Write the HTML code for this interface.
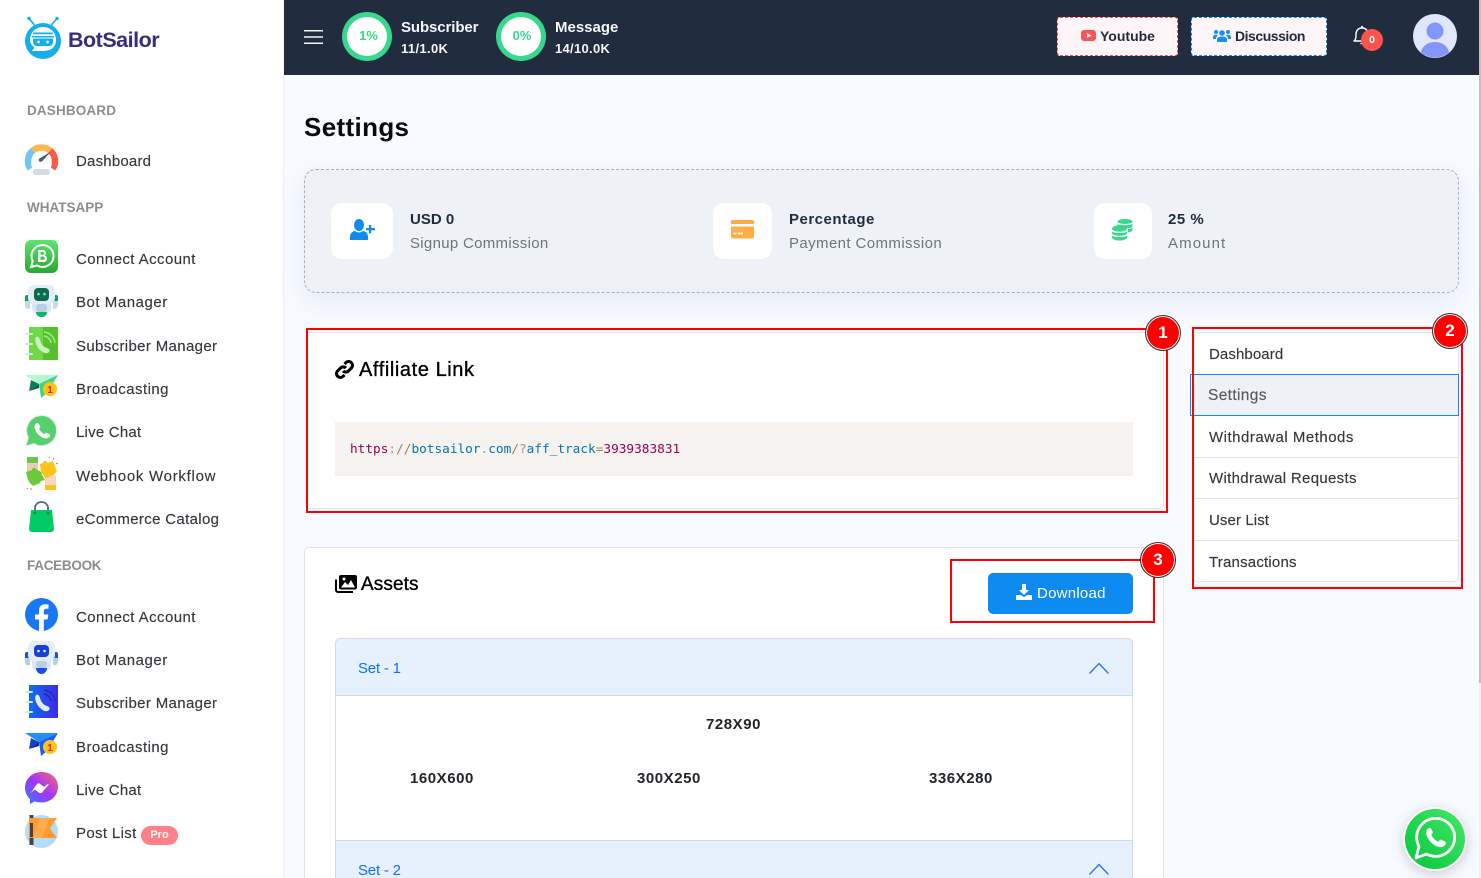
<!DOCTYPE html>
<html lang="en"><head><meta charset="utf-8"><title>Settings</title>
<style>
*{box-sizing:border-box}
html,body{margin:0;padding:0;width:1481px;height:878px;overflow:hidden;background:#f7faff;font-family:"Liberation Sans",sans-serif}
#wrap{position:absolute;left:0;top:0;width:1481px;height:878px;overflow:hidden}
.a{position:absolute}
.t{position:absolute;white-space:nowrap;line-height:20px;height:20px}
svg{position:absolute;display:block;overflow:visible}
#side{left:0;top:0;width:284px;height:878px;background:#fff;border-right:1px solid #eef0f4}
#top{left:284px;top:0;width:1195px;height:75px;background:#212d3f}
.nav{left:76px;font-size:15px;color:#34383d;margin-top:2px;-webkit-text-stroke:.15px #34383d}
.sec{left:27px;font-size:13.5px;font-weight:bold;color:#8b8d90;margin-top:1px}
.ring{width:50px;height:49px;border:5px solid #37d88c;border-radius:50%;background:#fff;top:12px;color:#37d88c;font-weight:bold;font-size:13px;text-align:center;line-height:38px}
.btn{top:17px;height:39px;background:#fef5f8;border-radius:3px;border:1px dashed}
.bt{font-size:14px;font-weight:bold;color:#212d3f}
.card{background:#fff;border:1px solid #e2e6ec;border-radius:5px}
.ib{top:203px;height:56px;background:#fff;border-radius:11px}
.sh{font-size:15px;font-weight:bold;color:#212d3f;margin-top:2px}
.sl{font-size:15px;color:#6c757d;margin-top:2px}
.li{left:1209px;font-size:15px;color:#33373b;margin-top:2px;-webkit-text-stroke:.15px #33373b}
.div{left:1193px;width:265px;height:1px;background:#e1e4e9}
.red{border:2px solid #f00}
.num{width:36px;height:36px;border-radius:50%;background:#f00;border:1px solid #333;box-shadow:inset 0 0 0 1px #fff;color:#fff;font-weight:bold;font-size:17px;text-align:center;line-height:34px}
.sz{font-size:15px;font-weight:bold;color:#212529;letter-spacing:.55px;margin-top:2px}
</style></head><body><div id="wrap">

<div class="a" id="side"></div>
<div class="a" id="top"></div>
<div class="a" style="left:1479px;top:0;width:2px;height:878px;background:#f1f1f1"></div>
<div class="a" style="left:1479px;top:0;width:2px;height:683px;background:#c1c1c1"></div>

<!-- logo -->
<svg style="left:25px;top:17px" width="36" height="42" viewBox="0 0 36 42">
<path d="M9.500 8 4.500 2M26.500 8 31.500 2" stroke="#12aef0" stroke-width="1.600" fill="none"/><circle cx="4" cy="1.500" r="1.700" fill="#12aef0"/><circle cx="32" cy="1.500" r="1.700" fill="#12aef0"/>
<circle cx="18" cy="24" r="18" fill="#12aef0"/>
<path d="M5 23c0-8 6-13 13-13s13 5 13 13c0 8-6 11-13 11H7l2.500-3.500C6.500 28.500 5 26 5 23z" fill="#fff"/>
<path d="M8 15.500h20v1.800H8zM7 19h22v1.500H7z" fill="#12aef0"/><path d="M8 21.500h20v3c0 3-2 4.500-4 4.500H12c-2 0-4-1.500-4-4.500z" fill="#12aef0"/><circle cx="13.500" cy="25" r="1.400" fill="#fff"/><circle cx="22.500" cy="25" r="1.400" fill="#fff"/>
</svg>
<div class="t" style="left:68px;top:28px;height:24px;line-height:24px;font-size:21.5px;font-weight:bold;color:#3a2b7d;letter-spacing:-.5px">BotSailor</div>

<div class="t sec" style="top:100px;letter-spacing:.15px">DASHBOARD</div>
<div class="t sec" style="top:197px">WHATSAPP</div>
<div class="t sec" style="top:555px;letter-spacing:-.28px">FACEBOOK</div>

<div class="t nav" style="top:150px;letter-spacing:.2px">Dashboard</div>
<div class="t nav" style="top:248px;letter-spacing:.43px">Connect Account</div>
<div class="t nav" style="top:291px;letter-spacing:.53px">Bot Manager</div>
<div class="t nav" style="top:335px;letter-spacing:.35px">Subscriber Manager</div>
<div class="t nav" style="top:378px;letter-spacing:.45px">Broadcasting</div>
<div class="t nav" style="top:421px;letter-spacing:.22px">Live Chat</div>
<div class="t nav" style="top:465px;letter-spacing:.72px">Webhook Workflow</div>
<div class="t nav" style="top:508px;letter-spacing:.34px">eCommerce Catalog</div>
<div class="t nav" style="top:606px;letter-spacing:.43px">Connect Account</div>
<div class="t nav" style="top:649px;letter-spacing:.53px">Bot Manager</div>
<div class="t nav" style="top:692px;letter-spacing:.35px">Subscriber Manager</div>
<div class="t nav" style="top:736px;letter-spacing:.45px">Broadcasting</div>
<div class="t nav" style="top:779px;letter-spacing:.22px">Live Chat</div>
<div class="t nav" style="top:822px;letter-spacing:.35px">Post List</div>
<div class="a" style="left:141px;top:826px;width:37px;height:19px;border-radius:10px;background:#ff8086;color:#fff;font-size:11px;font-weight:bold;text-align:center;line-height:18px">Pro</div>

<!-- sidebar icons -->
<svg style="left:25px;top:144px" width="33" height="31" viewBox="0 0 33 31">
<g fill="none" stroke-width="6.500"><path d="M5.440 24.740A13.500 13.500 0 0 1 7.820 6.660" stroke="#6fc5f5"/><path d="M7.820 6.660A13.500 13.500 0 0 1 25.180 6.660" stroke="#fdb84d"/><path d="M25.180 6.660A13.500 13.500 0 0 1 27.560 24.740" stroke="#fb5c4a"/></g>
<path d="M8 25.500A10.300 10.300 0 1 1 25 25.500Z" fill="#fff"/><path d="M14.500 14.500 26 7.500 17.500 17Z" fill="#4c5a6c"/><circle cx="15.500" cy="16" r="1.800" fill="#4c5a6c"/><rect x="8" y="25" width="17" height="6" rx="3" fill="#d2dae6"/></svg>

<svg style="left:25px;top:240px" width="33" height="33" viewBox="0 0 33 33"><defs><linearGradient id="g1" x1="0" y1="0" x2="0" y2="1"><stop offset="0" stop-color="#5fe36f"/><stop offset="1" stop-color="#27a82f"/></linearGradient></defs><rect width="33" height="33" rx="6" fill="url(#g1)"/><path d="M6 27l1.700-6A11 11 0 1 1 12 25.500Z" fill="none" stroke="#fff" stroke-width="2"/><path d="M13 10h5a3 3 0 0 1 1.500 5.500A3.200 3.200 0 0 1 18 22h-5ZM15.500 12v2.700H18a1.300 1.300 0 0 0 0-2.700ZM15.500 16.500v3.300H18a1.600 1.600 0 0 0 0-3.300Z" fill="#fff" fill-rule="evenodd"/></svg>

<svg style="left:25px;top:285px" width="33" height="32" viewBox="0 0 33 32"><rect x="0" y="10" width="5" height="9" rx="2" fill="#0f9e5f"/><rect x="28" y="10" width="5" height="9" rx="2" fill="#0f9e5f"/><path d="M0 16h5v7a2 2 0 0 1-2 1c-2 0-3-2-3-4zM33 16h-5v7c2 2 5 0 5-4z" fill="#c5d9ea"/><rect x="3" y="0" width="27" height="19" rx="6" fill="#e2edf5"/><rect x="9" y="3" width="15" height="13" rx="4" fill="#0e6a4e"/><circle cx="13.500" cy="9" r="1.300" fill="#7df0b8"/><circle cx="19.500" cy="9" r="1.300" fill="#7df0b8"/><path d="M7 19h19v5a4 4 0 0 1-4 4H11a4 4 0 0 1-4-4z" fill="#dbe8f2"/><rect x="11" y="19" width="11" height="8" rx="3" fill="#b8d0e6"/><path d="M11 27h11c0 3-2 5-5.500 5S11 30 11 27z" fill="#0bb569"/></svg>

<svg style="left:25px;top:327px" width="33" height="33" viewBox="0 0 33 33"><rect x="4" width="29" height="33" fill="#6fd845"/><rect x="18" width="15" height="33" fill="#55c12c"/><path d="M1 7h6M1 17h6M1 27h6" stroke="#d9e6ee" stroke-width="2" fill="none" stroke-linecap="round"/><path d="M11 10c2-1 3 0 4 3l1 3c2 3 3 4 6 5 3 1 3 3 2 4-3 3-7 0-10-3-3-4-5-9-3-12z" fill="#cdeec0"/><path d="M19 9a8 8 0 0 1 7 7M19 5a12 12 0 0 1 11 11" stroke="#a6e68a" stroke-width="1.500" fill="none"/></svg>

<svg style="left:25px;top:375px" width="33" height="24" viewBox="0 0 33 24"><path d="M0 0H33L14 9Z" fill="#b5f7d0"/><path d="M33 0 14 9 16 23 22 18Z" fill="#3ed48c"/><path d="M6 5 14 9 4 16Z" fill="#0e7b53"/><path d="M14 9 4 16 14 13Z" fill="#08593d"/><circle cx="25" cy="14" r="7" fill="#fcc419"/><text x="25" y="18" font-size="10" font-weight="bold" fill="#e81e63" text-anchor="middle" font-family="Liberation Sans,sans-serif">1</text></svg>

<svg style="left:25px;top:414px" width="33" height="33" viewBox="0 0 33 33"><path d="M1 32l2.300-8.500A15 15 0 1 1 9 29.500Z" fill="#56d06c" stroke="#e6e9e6" stroke-width="1"/><path d="M12 9c-2 1-3 3-2 6 1 4 5 8 9 9 3 1 5 0 6-2 0-1 0-2-1-2l-3-1.500-1.500 1.500c-2-.5-5-3.500-5.500-5.500l1.500-1.500L13.500 9.500Z" fill="#fff"/></svg>

<svg style="left:25px;top:457px" width="33" height="33" viewBox="0 0 33 33"><rect x="2" y="0" width="11" height="6" fill="#68c94a"/><path d="M2 6h11v13H2z" fill="#eccbb4"/><rect x="20" y="28" width="11" height="5" fill="#fcc419"/><path d="M20 19h11v9H20z" fill="#f4d7c4"/><path d="M15 7l3-1c0-2 3-3 4-1l1 1 5-2 4 11-2 1-1 2-8 3-2-1-1-3-2-1z" fill="#fcc419"/><path d="M1 15l6-2c0-2 3-3 4-1l5 3 1 3 3 5-4 1-1 2-7 3-1-1-2-2-2-3z" fill="#6cc93c"/><path d="M24 1l1-1M28 3l1-2M31 7l2-1M2 31l1 1M6 31l0 2" stroke="#777" stroke-width=".8"/></svg>

<svg style="left:29px;top:502px" width="25" height="30" viewBox="0 0 25 30"><path d="M6 10V6a6.500 6 0 0 1 13 0v4" stroke="#4f6b82" stroke-width="1.800" fill="none"/><path d="M2 8h21l2 19a3 3 0 0 1-3 3H3a3 3 0 0 1-3-3Z" fill="#00cc66"/><circle cx="6" cy="11" r="1.500" fill="#099150"/><circle cx="19" cy="11" r="1.500" fill="#099150"/></svg>

<svg style="left:25px;top:598px" width="33" height="33" viewBox="0 0 33 33"><circle cx="16.500" cy="16.500" r="16.500" fill="#1877f2"/><path d="M14 33V21.500H10V16.500H14V12.800C14 8.500 16.500 6.300 20.300 6.300c1.800 0 3.200.3 3.200.3v4.200h-2c-2.100 0-2.700 1.300-2.700 2.600v3.100H23.300L22.500 21.500H18.800V33Z" fill="#fff"/></svg>

<svg style="left:25px;top:641px" width="33" height="33" viewBox="0 0 33 33"><rect x="0" y="11" width="5" height="9" rx="2" fill="#1a4cf0"/><rect x="28" y="11" width="5" height="9" rx="2" fill="#1a4cf0"/><path d="M0 17h5v7c-2 1-5 0-5-4zM33 17h-5v7c2 1 5 0 5-4z" fill="#b9cfe6"/><rect x="3" y="0" width="27" height="20" rx="6" fill="#e2edf5"/><rect x="9" y="4" width="15" height="12" rx="4" fill="#1640d8"/><circle cx="13.500" cy="10" r="1.300" fill="#dbe7ff"/><circle cx="19.500" cy="10" r="1.300" fill="#dbe7ff"/><path d="M7 20h19v5a4 4 0 0 1-4 4H11a4 4 0 0 1-4-4z" fill="#dbe8f2"/><rect x="11" y="20" width="11" height="7" rx="3" fill="#b8d0e6"/><path d="M11 27h11c0 3-2 6-5.500 6S11 30 11 27z" fill="#1a4cf0"/></svg>

<svg style="left:25px;top:685px" width="33" height="33" viewBox="0 0 33 33"><defs><linearGradient id="g2" x1="0" y1="0" x2="1" y2="0"><stop offset="0" stop-color="#0f6ef0"/><stop offset="1" stop-color="#3d2ae8"/></linearGradient></defs><rect x="4" width="29" height="33" fill="url(#g2)"/><path d="M1 7h6M1 17h6M1 27h6" stroke="#d9e6ee" stroke-width="2" fill="none" stroke-linecap="round"/><path d="M11 10c2-1 3 0 4 3l1 3c2 3 3 4 6 5 3 1 3 3 2 4-3 3-7 0-10-3-3-4-5-9-3-12z" fill="#e4ecf5"/><path d="M19 9a8 8 0 0 1 7 7M19 5a12 12 0 0 1 11 11" stroke="#2a27a8" stroke-width="1.500" fill="none"/></svg>

<svg style="left:25px;top:733px" width="33" height="24" viewBox="0 0 33 24"><path d="M0 0H33L14 9Z" fill="#1e90ff"/><path d="M33 0 14 9 16 23 22 18Z" fill="#1c5cf0"/><path d="M6 5 14 9 4 16Z" fill="#1640c8"/><path d="M14 9 4 16 14 13Z" fill="#0a2a96"/><circle cx="25" cy="14" r="7" fill="#fcc419"/><text x="25" y="18" font-size="10" font-weight="bold" fill="#e81e63" text-anchor="middle" font-family="Liberation Sans,sans-serif">1</text></svg>

<svg style="left:25px;top:772px" width="33" height="33" viewBox="0 0 33 33"><defs><linearGradient id="g3" x1="0" y1="1" x2="1" y2="0"><stop offset="0" stop-color="#2d7bff"/><stop offset=".5" stop-color="#a334fa"/><stop offset="1" stop-color="#ff6968"/></linearGradient></defs><path d="M16.500 0C7.300 0 0 6.900 0 15.700c0 4.600 2 8.600 5 11.300V32l4.800-2.600c2 .7 4.300 1 6.700 1 9.200 0 16.500-6.800 16.500-15.700S25.700 0 16.500 0Z" fill="url(#g3)"/><path d="M6.500 20 11.500 12.500c.8-1.200 2.400-1.500 3.500-.6l4 3 3.700-2.800c.5-.4 1.200.2.800.8L17.500 20c-.8 1.200-2.400 1.500-3.500.6l-4-3-3.700 2.800c-.5.400-1.200-.2-.8-.8Z" fill="#fff"/></svg>

<svg style="left:25px;top:815px" width="33" height="33" viewBox="0 0 33 33"><circle cx="16.500" cy="16.500" r="16.500" fill="#b2dcf8"/><rect x="4.500" y="0" width="4" height="30" fill="#444"/><path d="M4 3H32L25 13.500 32 23H4Z" fill="#ff9a2e"/><path d="M15 3h10L17 23H8Z" fill="#ffab4e"/><rect x="5" y="8" width="3" height="14" fill="#444"/></svg>

<!-- top bar -->
<svg style="left:304px;top:30px" width="19" height="14"><path d="M0 .75H19M0 7H19M0 13.250H19" stroke="#f2f4f7" stroke-width="1.500"/></svg>
<div class="a ring" style="left:342px;padding-left:3px">1%</div>
<div class="t" style="left:401px;top:18px;font-size:15px;font-weight:bold;color:#f4f6f8;letter-spacing:-.1px">Subscriber</div>
<div class="t" style="left:401px;top:39px;font-size:13px;font-weight:bold;color:#f4f6f8;letter-spacing:.35px">11/1.0K</div>
<div class="a ring" style="left:496px;padding-left:2px">0%</div>
<div class="t" style="left:555px;top:18px;font-size:15px;font-weight:bold;color:#f4f6f8">Message</div>
<div class="t" style="left:555px;top:39px;font-size:13px;font-weight:bold;color:#f4f6f8;letter-spacing:.3px">14/10.0K</div>

<div class="a btn" style="left:1057px;width:121px;border-color:#e05560"></div>
<svg style="left:1081px;top:30px" width="15" height="11"><rect width="15" height="11" rx="3" fill="#f8545c"/><path d="M6 3 10.500 5.500 6 8Z" fill="#fff"/></svg>
<div class="t bt" style="left:1100px;top:26px">Youtube</div>
<div class="a btn" style="left:1191px;width:136px;border-color:#0d8bf0"></div>
<svg style="left:1213px;top:29px" width="18" height="13" viewBox="0 0 18 13" fill="#1890f0"><circle cx="9" cy="4" r="2.800"/><circle cx="3" cy="3" r="2"/><circle cx="15" cy="3" r="2"/><path d="M4 13V10.500C4 8.500 6 7.500 9 7.500s5 1 5 3V13ZM0 8.500C0 6.500 1.500 5.800 3 5.800c1 0 1.500.3 2 .8-1.500.8-2 2-2 3.400H0ZM18 8.500c0-2-1.500-2.700-3-2.700-1 0-1.500.3-2 .8 1.500.8 2 2 2 3.400h3Z"/></svg>
<div class="t bt" style="left:1235px;top:26px;letter-spacing:-.47px">Discussion</div>
<svg style="left:1353px;top:25px" width="18" height="20" viewBox="0 0 18 20"><path d="M1 16c2-2 2-3 2-7 0-3 2-6 6-6s6 3 6 6c0 4 0 5 2 7Z" fill="none" stroke="#fff" stroke-width="1.400" stroke-linejoin="round"/><path d="M7.500 18.500h3" stroke="#fff" stroke-width="1.400"/><circle cx="9" cy="1.800" r="1" fill="#fff"/></svg>
<div class="a" style="left:1361px;top:29px;width:22px;height:22px;border-radius:50%;background:#fc544b;color:#fff;font-size:10.5px;font-weight:bold;text-align:center;line-height:23px">0</div>
<svg style="left:1413px;top:14px" width="44" height="44" viewBox="0 0 44 44"><defs><clipPath id="av"><circle cx="22" cy="22" r="21.500"/></clipPath></defs><circle cx="22" cy="22" r="22" fill="#dfe8fb"/><g clip-path="url(#av)" fill="#8296fb"><circle cx="22" cy="17" r="8.500"/><path d="M7 44c0-10 6-16 15-16s15 6 15 16Z"/></g></svg>

<!-- page -->
<div class="t" style="left:304px;top:112px;height:30px;line-height:30px;font-size:26px;font-weight:bold;color:#0a0a0a;letter-spacing:.35px">Settings</div>

<div class="a" style="left:304px;top:169px;width:1155px;height:124px;background:#eef2f6;border:1px dashed #a9b1bd;border-radius:12px;box-shadow:0 8px 24px rgba(160,175,205,.18)"></div>
<div class="a ib" style="left:331px;width:62px"></div>
<div class="a ib" style="left:713px;width:59px"></div>
<div class="a ib" style="left:1094px;width:58px"></div>
<svg style="left:350px;top:219px" width="25" height="21" viewBox="0 0 25 21" fill="#0d8bf0"><ellipse cx="9" cy="6" rx="5" ry="6"/><path d="M0 21v-3c0-4 3-6 5-6 3 2 5 2 8 0 2 0 5 2 5 6v3Z"/><path d="M19 6h2.200v3H25v2.200h-3.800v3H19v-3h-3V9h3Z"/></svg>
<svg style="left:731px;top:220px" width="23" height="19" viewBox="0 0 23 19" fill="#ffac45"><path d="M0 3a2 2 0 0 1 2-3h19a2 2 0 0 1 2 3v1H0Z"/><path d="M0 6.500H23V16a2 2 0 0 1-2 2.500H2A2 2 0 0 1 0 16Z"/><rect x="2.500" y="12.500" width="3" height="2" fill="#fff"/><rect x="7" y="12.500" width="5" height="2" fill="#fff"/></svg>
<svg style="left:1112px;top:219px" width="22" height="22" viewBox="0 0 22 22" fill="#37d88c"><ellipse cx="13" cy="2.500" rx="7.500" ry="2.500"/><path d="M5.500 5c2 1.500 13 1.500 15 0v2c0 1.500-2 2-5 2.200-2-1-6-1.500-10-1Z"/><path d="M16 10c2 0 3.500-.5 4.500-1.500V11c0 1-1.500 2-4.500 2Z"/><ellipse cx="7.500" cy="9.500" rx="7.500" ry="3.200"/><path d="M0 12.500c2 2 13 2 15 0v2c-1 3-14 3-15 0Z"/><path d="M0 16.500c2 2 13 2 15 0v2c-1 4-14 4-15 0Z"/></svg>

<div class="t sh" style="left:410px;top:208px">USD 0</div>
<div class="t sl" style="left:410px;top:232px;letter-spacing:.3px">Signup Commission</div>
<div class="t sh" style="left:789px;top:208px;letter-spacing:.5px">Percentage</div>
<div class="t sl" style="left:789px;top:232px;letter-spacing:.4px">Payment Commission</div>
<div class="t sh" style="left:1168px;top:208px;letter-spacing:.5px">25 %</div>
<div class="t sl" style="left:1168px;top:232px;letter-spacing:1.1px">Amount</div>

<!-- affiliate -->
<div class="a card" style="left:305px;top:332px;width:859px;height:177px"></div>
<div class="a red" style="left:306px;top:328px;width:862px;height:185px"></div>
<svg style="left:335px;top:360px" width="19" height="19" viewBox="0 0 20 20" fill="none" stroke="#000" stroke-width="3.200"><path d="M8.500 11.500a4 4 0 0 0 5.700 0l3-3a4 4 0 0 0-5.700-5.700L10 4.300"/><path d="M11.500 8.500a4 4 0 0 0-5.700 0l-3 3a4 4 0 0 0 5.700 5.700L10 15.700"/></svg>
<div class="t" style="left:359px;top:360px;font-size:20px;color:#000;letter-spacing:.58px;-webkit-text-stroke:.35px #000">Affiliate Link</div>
<div class="a" style="left:335px;top:422px;width:798px;height:54px;background:#f5f2f0"></div>
<div class="t" style="left:350px;top:440px;font-family:'DejaVu Sans Mono',monospace;font-size:12.75px;margin-top:-2px;padding-top:2px;height:22px"><span style="color:#905">https</span><span style="color:#999">:</span><span style="color:#a67f59">//</span><span style="color:#07a">botsailor</span><span style="color:#999">.</span><span style="color:#07a">com</span><span style="color:#a67f59">/</span><span style="color:#999">?</span><span style="color:#07a">aff_track</span><span style="color:#a67f59">=</span><span style="color:#905">3939383831</span></div>

<!-- list -->
<div class="a card" style="left:1192px;top:332px;width:267px;height:250px;border-radius:6px"></div>
<div class="a" style="left:1190px;top:374px;width:269px;height:42px;background:#eef2f6;border:1px solid #0d8bf0"></div>
<div class="a div" style="top:457px"></div>
<div class="a div" style="top:498px"></div>
<div class="a div" style="top:540px"></div>
<div class="t li" style="top:343px;letter-spacing:.1px">Dashboard</div>
<div class="t li" style="left:1208px;top:384px;color:#565a5f;-webkit-text-stroke:.15px #565a5f;font-size:15.5px;letter-spacing:.35px">Settings</div>
<div class="t li" style="top:426px;letter-spacing:.5px">Withdrawal Methods</div>
<div class="t li" style="top:467px;letter-spacing:.32px">Withdrawal Requests</div>
<div class="t li" style="top:509px;letter-spacing:.1px">User List</div>
<div class="t li" style="top:551px;letter-spacing:.2px">Transactions</div>
<div class="a red" style="left:1192px;top:327px;width:271px;height:262px"></div>

<!-- assets -->
<div class="a card" style="left:304px;top:547px;width:860px;height:331px;border-bottom:0;border-radius:5px 5px 0 0"></div>
<svg style="left:335px;top:575px" width="22" height="18" viewBox="0 0 22 18"><path d="M1 4.500V15a2 2 0 0 0 2 2h15" fill="none" stroke="#000" stroke-width="2"/><rect x="4" y="0" width="18" height="14.500" rx="2" fill="#000"/><path d="M6 12.500 10 7l3 3 3-5 4 7.500Z" fill="#fff"/><circle cx="9" cy="4" r="1.500" fill="#fff"/></svg>
<div class="t" style="left:361px;top:575px;font-size:19px;color:#000;letter-spacing:.1px;-webkit-text-stroke:.35px #000">Assets</div>
<div class="a red" style="left:950px;top:559px;width:205px;height:64px"></div>
<div class="a" style="left:988px;top:573px;width:145px;height:41px;background:#0d8bf0;border-radius:5px"></div>
<svg style="left:1016px;top:584px" width="16" height="16" viewBox="0 0 16 16" fill="#fff"><path d="M6 0h4v6h3L8 11 3 6h3Z"/><path d="M0 11h4.500L8 13l3.500-2H16v5H0Z"/></svg>
<div class="t" style="left:1037px;top:584px;font-size:15px;color:#fff;letter-spacing:.25px">Download</div>

<div class="a" style="left:335px;top:638px;width:798px;height:203px;background:#fff;border:1px solid #d9dde4;border-radius:5px 5px 0 0"></div>
<div class="a" style="left:335px;top:638px;width:798px;height:58px;background:#e7f1fd;border:1px solid #d4d9e2;border-radius:5px 5px 0 0"></div>
<div class="t" style="left:358px;top:659px;font-size:15px;color:#0d6efd;letter-spacing:-.2px">Set - 1</div>
<svg style="left:1089px;top:662px" width="20" height="12"><path d="M.5 11.500 10 1.500 19.500 11.500" fill="none" stroke="#2d72e8" stroke-width="1.300"/></svg>
<div class="t sz" style="left:706px;top:713px">728X90</div>
<div class="t sz" style="left:410px;top:767px">160X600</div>
<div class="t sz" style="left:637px;top:767px">300X250</div>
<div class="t sz" style="left:929px;top:767px">336X280</div>
<div class="a" style="left:335px;top:840px;width:798px;height:38px;background:#e7f1fd;border:1px solid #d4d9e2;border-bottom:0"></div>
<div class="t" style="left:358px;top:861px;font-size:15px;color:#0d6efd;letter-spacing:-.2px">Set - 2</div>
<svg style="left:1089px;top:863px" width="20" height="12"><path d="M.5 11.500 10 1.500 19.500 11.500" fill="none" stroke="#2d72e8" stroke-width="1.300"/></svg>

<div class="a num" style="left:1145px;top:315px">1</div>
<div class="a num" style="left:1432px;top:313px">2</div>
<div class="a num" style="left:1140px;top:542px">3</div>

<!-- whatsapp float -->
<svg style="left:1403px;top:807px;filter:drop-shadow(0 3px 6px rgba(0,0,0,.18))" width="64" height="64" viewBox="0 0 64 64"><defs><linearGradient id="g4" x1="0" y1="1" x2="1" y2="0"><stop offset="0" stop-color="#03c63c"/><stop offset="1" stop-color="#45e767"/></linearGradient></defs><circle cx="32" cy="32" r="32" fill="#fff"/><circle cx="32" cy="32" r="30" fill="url(#g4)"/><path d="M13 51l3-11.500a19 19 0 1 1 7.500 7.500Z" fill="none" stroke="#fff" stroke-width="2.800" stroke-linejoin="round"/><path d="M26 21c-2 1-3.500 3-2.500 7 1.500 5 7 11 12.500 12 3 .5 5.500-.5 6.500-2.500.5-1.500.5-2.500-.5-3l-3.500-1.700c-1-.4-1.500 0-2 .6l-1 1.400c-3-1-6-4-7.200-7l1.200-1.300c.5-.6.5-1 .2-1.700L28 21.500c-.5-.8-1.200-.8-2-.5Z" fill="#fff"/></svg>

</div></body></html>
